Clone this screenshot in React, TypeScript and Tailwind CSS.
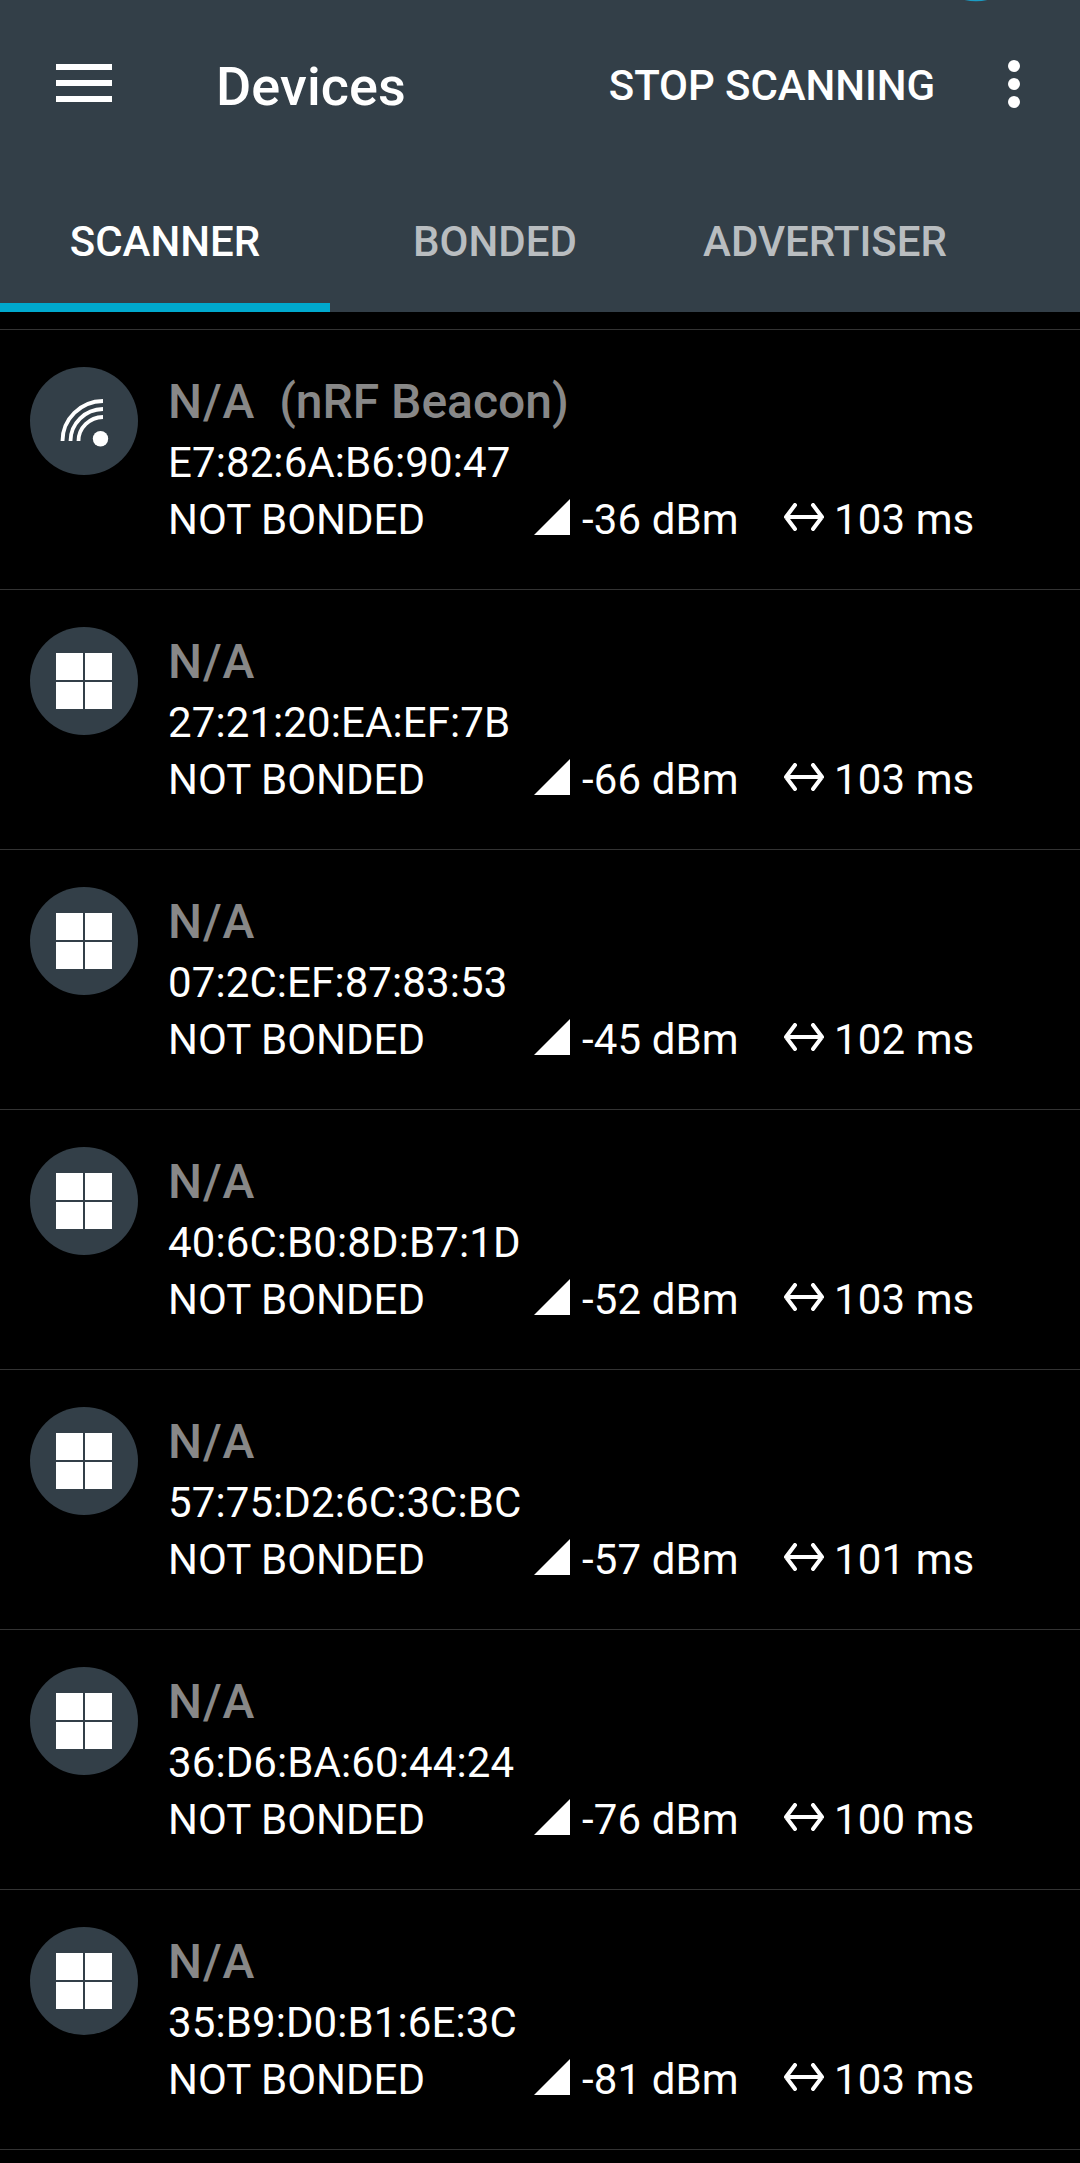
import clsx from 'clsx'

type Device = {
  name: string
  label?: string
  address: string
  rssi: number
  interval: number
  kind: 'beacon' | 'windows'
}

const devices: Device[] = [
  { name: 'N/A', label: '(nRF Beacon)', address: 'E7:82:6A:B6:90:47', rssi: -36, interval: 103, kind: 'beacon' },
  { name: 'N/A', address: '27:21:20:EA:EF:7B', rssi: -66, interval: 103, kind: 'windows' },
  { name: 'N/A', address: '07:2C:EF:87:83:53', rssi: -45, interval: 102, kind: 'windows' },
  { name: 'N/A', address: '40:6C:B0:8D:B7:1D', rssi: -52, interval: 103, kind: 'windows' },
  { name: 'N/A', address: '57:75:D2:6C:3C:BC', rssi: -57, interval: 101, kind: 'windows' },
  { name: 'N/A', address: '36:D6:BA:60:44:24', rssi: -76, interval: 100, kind: 'windows' },
  { name: 'N/A', address: '35:B9:D0:B1:6E:3C', rssi: -81, interval: 103, kind: 'windows' },
]

const tabs = ['SCANNER', 'BONDED', 'ADVERTISER']

function MenuIcon() {
  return (
    <svg width="56" height="38" viewBox="0 0 56 38" fill="currentColor">
      <path d="M0 0h56v6H0zM0 16h56v6H0zM0 32h56v6H0z" />
    </svg>
  )
}

function MoreIcon() {
  return (
    <svg width="12" height="48" viewBox="0 0 12 48" fill="currentColor">
      <circle cx="6" cy="6" r="6" />
      <circle cx="6" cy="24" r="6" />
      <circle cx="6" cy="42" r="6" />
    </svg>
  )
}

function BeaconIcon() {
  return (
    <svg width="108" height="108" viewBox="0 0 108 108" fill="none" stroke="currentColor" strokeWidth="3.8">
      <path d="M32.5 74A41 40 0 0 1 73 34M40.5 74A33 32 0 0 1 73 42M48.5 74A25 24 0 0 1 73 50" />
      <circle cx="70.5" cy="71.7" r="7.7" fill="currentColor" stroke="none" />
    </svg>
  )
}

function WindowsIcon() {
  return (
    <svg width="108" height="108" viewBox="0 0 108 108" fill="currentColor">
      <path d="M26 26h27v27H26zM55 26h27v27H55zM26 55h27v27H26zM55 55h27v27H55z" />
    </svg>
  )
}

function SignalIcon() {
  return (
    <svg width="36" height="36" viewBox="0 0 36 36" fill="currentColor">
      <path d="M36 0v36H0z" />
    </svg>
  )
}

function IntervalIcon() {
  return (
    <svg
      width="40"
      height="28"
      viewBox="0 0 40 28"
      fill="none"
      stroke="currentColor"
      strokeWidth="4"
      strokeLinecap="round"
      strokeLinejoin="round"
    >
      <path d="M2 14h36M11 2L2 14l9 12M29 2l9 12-9 12" />
    </svg>
  )
}

function DeviceRow({ device }: { device: Device }) {
  return (
    <li className="flex h-[260px] border-b border-[#333333] pl-[30px] pt-[37px]">
      <div className="h-[108px] w-[108px] shrink-0 rounded-full bg-[#333f48]">
        {device.kind === 'beacon' ? <BeaconIcon /> : <WindowsIcon />}
      </div>
      <div className="ml-[30px] flex-1 text-[42px] leading-[57px]">
        <h2 className="mt-[3px] whitespace-pre text-[48px] font-medium leading-[64px] text-[#888888]">
          <span className="tracking-[0.9px]">{device.name}</span>
          {device.label && `  ${device.label}`}
        </h2>
        <p className="tracking-[0.1px]">{device.address}</p>
        <div className="flex">
          <p className="w-[366px]">NOT BONDED</p>
          <div className="flex w-[250px] tracking-[0.1px]">
            <span className="mr-[12px] mt-[8px]">
              <SignalIcon />
            </span>
            {device.rssi} dBm
          </div>
          <div className="flex tracking-[0.1px]">
            <span className="mr-[10px] mt-[12px]">
              <IntervalIcon />
            </span>
            {device.interval} ms
          </div>
        </div>
      </div>
    </li>
  )
}

export default function App() {
  return (
    <div className="h-[2163px] w-[1080px] overflow-hidden bg-black font-[Roboto,sans-serif] text-white">
      <header className="relative h-[312px] bg-[#333f48]">
        {/* status badge peeking out from the top edge */}
        <svg className="absolute left-[956px] top-0" width="40" height="2" viewBox="0 0 40 2" fill="#1b9cc4">
          <circle cx="20" cy="-48.7" r="50" />
        </svg>
        <div className="flex h-[168px] items-center pl-[56px] pr-[60px]">
          <button className="mr-[104px] pb-[2px]">
            <MenuIcon />
          </button>
          <h1 className="pt-[4px] text-[54px] font-medium tracking-[0.1px]">Devices</h1>
          <button className="ml-auto mr-[73px] pt-[2px] text-[42px] font-medium tracking-[-0.08px]">
            STOP SCANNING
          </button>
          <button>
            <MoreIcon />
          </button>
        </div>
        <nav className="flex h-[144px]">
          {tabs.map((tab, i) => (
            <button
              key={tab}
              className={clsx(
                'w-[330px] border-b-9 pt-[12px] text-[42px] font-medium',
                i === 0 ? 'border-[#00a9ce]' : 'border-transparent text-[#b9bdc0]',
              )}
            >
              {tab}
            </button>
          ))}
        </nav>
      </header>
      <div className="h-[18px] border-b border-[#333333]" />
      <ul>
        {devices.map((device) => (
          <DeviceRow key={device.address} device={device} />
        ))}
      </ul>
    </div>
  )
}
